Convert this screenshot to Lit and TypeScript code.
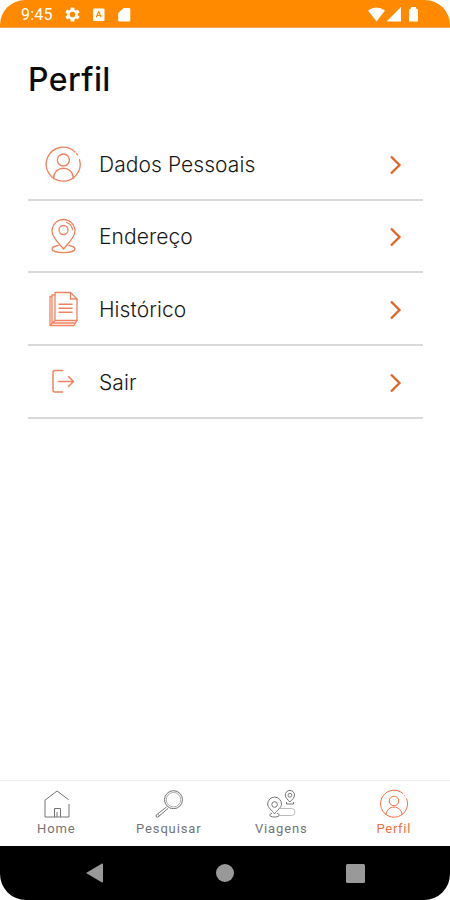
import { LitElement, html, svg, css } from "lit";
import { customElement, state } from "lit/decorators.js";

const person = svg`
  <path d="M31 6A17 17 0 1 0 35.500 13.500"/><path d="M32.500 7.500l1 1.300"/>
  <circle cx="19.400" cy="14" r="6"/>
  <path d="M9.500 32.500C9.800 18.800 29 18.800 29.400 32.500"/>`;
const pin = svg`
  <path d="M19.500 31C14.500 25 8 19.500 8 13a11.500 11.500 0 0 1 23 0C31 19.500 24.500 25 19.500 31Z"/>
  <path d="M22.500 4.500c3.200 1 5.500 3.800 6 7"/>
  <circle cx="19.500" cy="12" r="4.500"/>
  <path d="M14 27.500C9.500 28.300 8 29.600 8 31c0 4.800 23 4.800 23 0 0-1.400-1.500-2.700-6-3.500"/>`;
const pages = svg`
  <path d="M11 1.500h15.500l6.500 6.500v21.500H11Z"/>
  <path d="M26.500 1.500v6.500H33"/>
  <path d="M11 4H8v28h22.500M8 5.500H6V34.500h24l3-5M6 34.500l5-5"/>
  <path stroke-width="1.500" d="M15 13.200h13M15 17.200h13M15 21.200h13"/>`;
const exit = svg`
  <path stroke-width="1.500" d="M18.500 6.500H11q-2 0-2 2v17.500q0 2 2 2h7.500M14.500 17.500h14.500M24.500 12.500l5 5-5 5"/>`;
const home = svg`
  <path d="M26.700 9.700 15 1 3 10.200V27H27V14"/>
  <path d="M12.500 27v-8.500h6V27M15 27V22"/>`;
const search = svg`
  <circle cx="18.500" cy="9.700" r="9"/>
  <circle cx="18.500" cy="9.700" r="7.200" stroke-width=".6"/>
  <path d="M11.500 17 1.200 25q-1 2.500 1.600 2.200L13.200 18.300M3 24.500l1.800 1.500"/>`;
const trips = svg`
  <path d="M7.500 24C5 19.800.700 18 .700 14a6.900 6.900 0 0 1 13.800 0C14.500 18 10 19.800 7.500 24Z"/>
  <circle cx="7.600" cy="14.500" r="2.800"/>
  <path d="M5 23.300c-3.500 1-3 3.700 2.500 3.700s6-2.700 2.500-3.700"/>
  <path d="M22.800 12C20.800 9.500 18.300 8 18.300 5a4.600 4.600 0 0 1 9.200 0C27.500 8 25 9.500 22.800 12Z"/>
  <circle cx="22.900" cy="5.200" r="1.900"/><path d="M19.500 12v2h7v-2"/>
  <path stroke="#bbb" d="M12.500 18.500h12q3.500 0 3.500 3.500t-3.500 3.500H12"/>`;
const profile = svg`
  <path d="M23 3.600A13.500 13.500 0 1 0 26.500 8.500M24.300 4.900l.8.900"/>
  <circle cx="14" cy="11" r="4.800"/>
  <path d="M6 25C6.500 14.500 21.500 14.500 22 25"/>`;

@customElement("app-root")
export class AppRoot extends LitElement {
  @state() private active = "Perfil";

  private rows = [
    { label: "Dados Pessoais", icon: person },
    { label: "Endereço", icon: pin },
    { label: "Histórico", icon: pages },
    { label: "Sair", icon: exit },
  ];
  private tabs = [
    { label: "Home", icon: home },
    { label: "Pesquisar", icon: search },
    { label: "Viagens", icon: trips },
    { label: "Perfil", icon: profile },
  ];

  static styles = css`
    :host { display: block; background: #fff; }
    * { box-sizing: border-box; }
    svg { display: block; flex: none; overflow: visible; }
    .screen { width: 450px; height: 900px; display: flex; flex-direction: column; background: #fff; overflow: hidden; font-family: Inter, sans-serif; }
    .status { height: 28px; background: #ff8a00; border-radius: 25px 25px 0 0; border-bottom: 1px solid #ffa750; display: flex; align-items: center; padding: 2px 29px 0 21px; color: #fff; font: 400 16px/20px Roboto, sans-serif; }
    .time { width: 43px; letter-spacing: .2px; }
    .grow { flex: 1; }
    main { flex: 1; padding: 32px 27px 0 28px; }
    h1 { margin: 0 0 28px; font-size: 32px; line-height: 40px; font-weight: 500; letter-spacing: .4px; color: #0b0b0b; }
    .row { height: 72.670px; border-bottom: 2px solid #d9d9d9; display: flex; align-items: center; padding: 3px 21px 0 16px; }
    .label { flex: 1; margin-left: 17px; font-size: 21px; line-height: 28px; font-weight: 300; letter-spacing: .07px; color: #171717; }
    .ico { fill: none; stroke: #f08262; stroke-width: 1.300; stroke-linecap: round; stroke-linejoin: round; }
    .chev { fill: none; stroke: #df6426; stroke-width: 2.300; }
    .tabs { height: 66px; border-top: 1px solid #eee; display: flex; }
    .tab { flex: 1; display: flex; flex-direction: column; align-items: center; padding-top: 9px; color: #747474; font: 400 13px/16px Roboto, sans-serif; letter-spacing: .85px; }
    .tab svg { fill: none; stroke: #747474; stroke-width: 1; margin-bottom: 3px; }
    .tab.on { color: #f2703f; letter-spacing: .7px; }
    .tab.on svg { stroke: #f2703f; }
    .nav { height: 54px; background: #000; border-radius: 0 0 26px 26px; display: flex; align-items: center; justify-content: space-between; padding: 0 85px 0 86px; }
    .nav svg { fill: #999; }
  `;

  render() {
    return html`<div class="screen">
      <div class="status">
        <span class="time">9:45</span>
        <svg width="17" height="17" viewBox="0 0 24 24" fill="#fff"><path d="M19.400 13c.1-.7.100-1.300 0-2l2.600-2-2.300-4-3 1.200-1.700-1L14.500 2h-5L9 5.200l-1.700 1-3-1.200L2 9l2.600 2v2L2 15l2.300 4 3-1.200 1.700 1 .5 3.200h5l.5-3.200 1.700-1 3 1.200 2.300-4ZM12 16a4 4 0 1 1 0-8 4 4 0 0 1 0 8Z"/></svg>
        <svg width="36" height="14" viewBox="0 0 36 14"><rect x="12" y=".5" width="11.500" height="12.500" rx="1" fill="#fff"/><path d="m15.200 9.300 2.500-5.500 2.500 5.500M16.200 7.500h3" stroke="#ff8a00" fill="none" stroke-width="1.200"/></svg>
        <svg width="13" height="14" viewBox="-3 0 13 14"><path d="M3.700 0H9q1.300 0 1.300 1.300v10.900q0 1.300-1.300 1.300H-.5q-1.300 0-1.300-1.300V5Z" fill="#fff"/></svg>
        <span class="grow"></span>
        <svg width="53" height="16" viewBox="0 0 53 16" fill="#fff"><path d="M0 3.500Q8.500-2.700 17 3.500L8.500 14.500ZM33 0v14.500H18.500ZM41 2.500l2-1V0h5v1.500l2 1v12h-9Z"/></svg>
      </div>
      <main>
        <h1>Perfil</h1>
        <div>${this.rows.map((r) => html`<div class="row">
          <svg class="ico" width="38" height="38" viewBox="0 0 38 38">${r.icon}</svg>
          <span class="label">${r.label}</span>
          <svg class="chev" width="14" height="20" viewBox="0 0 14 20"><path d="m3 1.500 8.500 8.500-8.500 8.500"/></svg>
        </div>`)}</div>
      </main>
      <div class="tabs">${this.tabs.map((t) => html`<div class="tab ${t.label === this.active ? "on" : ""}" @click=${() => (this.active = t.label)}>
        <svg width="28" height="28" viewBox="0 0 28 28">${t.icon}</svg><span>${t.label}</span>
      </div>`)}</div>
      <div class="nav">
        <svg width="17" height="20" viewBox="0 0 17 20"><path d="M0 10 16 .5q1 0 1 1v17q0 1-1 1Z"/></svg>
        <svg width="18" height="18" viewBox="0 0 18 18"><circle cx="9" cy="9" r="9"/></svg>
        <svg width="19" height="19" viewBox="0 0 19 19"><rect width="19" height="19" rx="1.500"/></svg>
      </div>
    </div>`;
  }
}
